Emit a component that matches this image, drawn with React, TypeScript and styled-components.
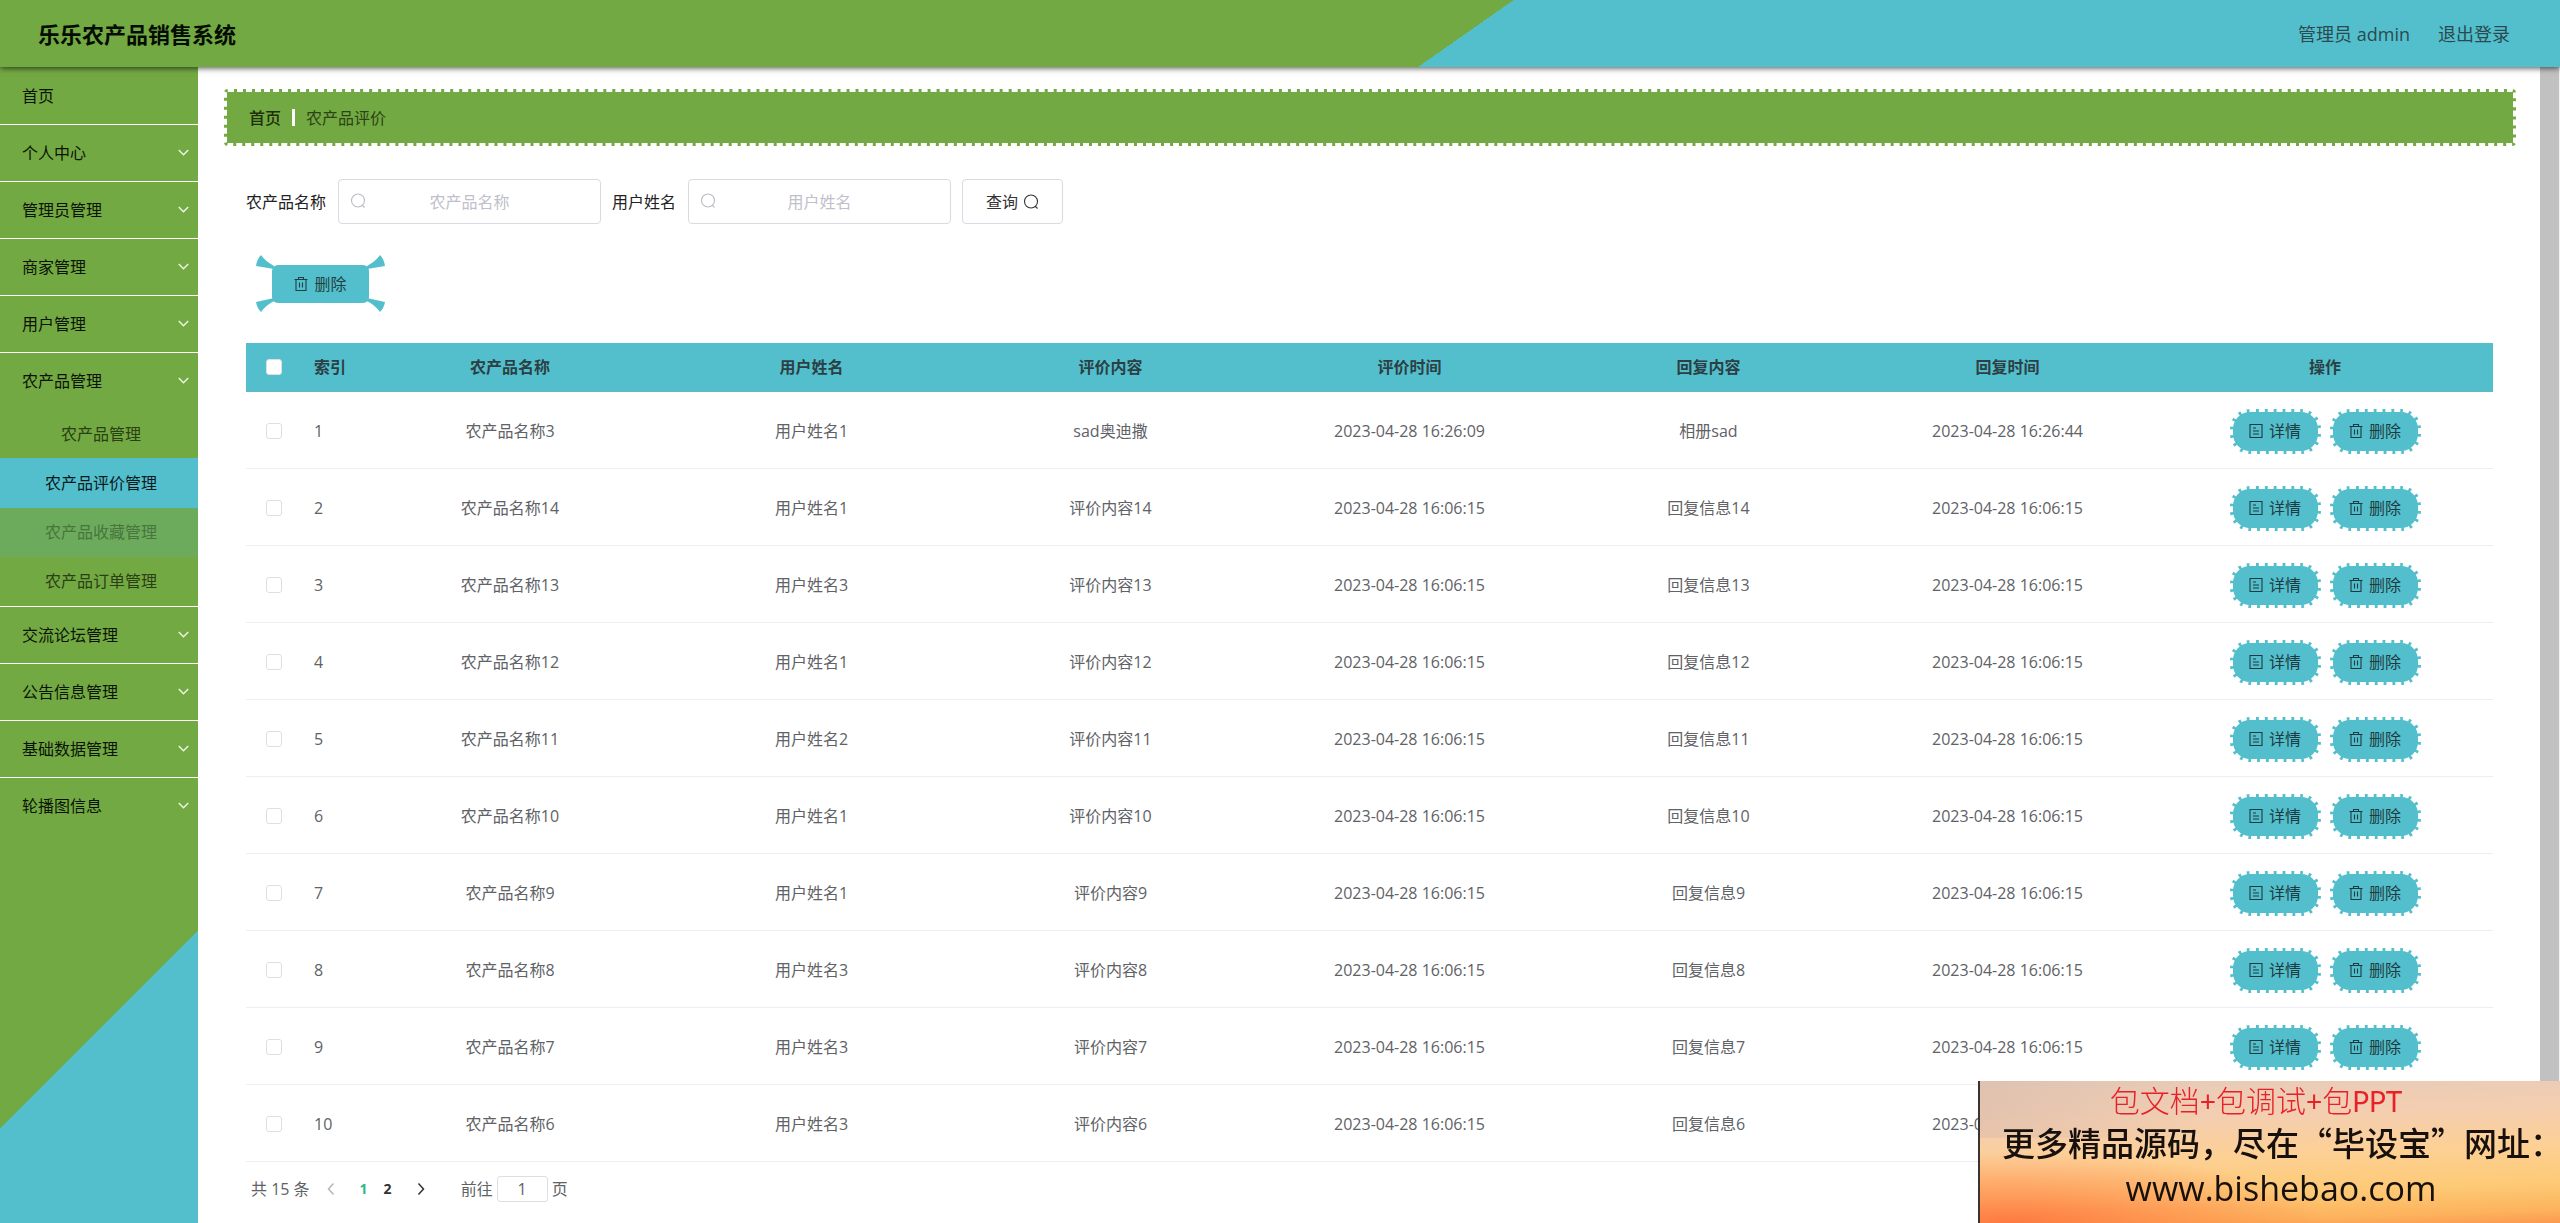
import React from "react";
import styled, { createGlobalStyle, css } from "styled-components";

const green = "#73a943";
const blue = "#54bfcc";

const GlobalStyle = createGlobalStyle`
  *, *::before, *::after { box-sizing: border-box; }
  body {
    margin: 0;
    background: #fff;
    color: #333;
    font: 16px/24px "Open Sans", "Noto Sans CJK SC", sans-serif;
  }
  button, input { font: inherit; color: inherit; }
  ul { list-style: none; margin: 0; padding: 0; }
  a { color: inherit; text-decoration: none; }
`;

const Page = styled.div`
  min-height: 100vh;
  display: flex;
  flex-direction: column;
`;

const Header = styled.header`
  position: relative;
  z-index: 2;
  height: 67px;
  padding: 0 50px 0 38px;
  display: flex;
  align-items: center;
  justify-content: space-between;
  background: linear-gradient(145deg, ${green} 57%, ${blue} 57%);
  box-shadow: 0 1px 6px rgba(0, 0, 0, 0.7);
`;

const Title = styled.h1`
  margin: 0;
  font-size: 22px;
  line-height: 32px;
  font-weight: 700;
  color: #050d02;
`;

const UserNav = styled.nav`
  display: flex;
  gap: 28px;
  font-size: 18px;
  color: #2b4a50;
`;

const Body = styled.div`
  flex: 1;
  display: flex;
`;

const Sidebar = styled.nav`
  flex: 0 0 198px;
  padding-top: 1px;
  background: linear-gradient(-45deg, ${blue} 207px, ${green} 207px);
`;

const MenuItem = styled.li`
  border-bottom: 1px solid #fff;
  &:last-child { border-bottom: 0; }
`;

const MenuLink = styled.a`
  height: 56px;
  padding: 0 8px 0 22px;
  display: flex;
  align-items: center;
  justify-content: space-between;
  color: #0b1404;
`;

const SubMenu = styled.ul`
  height: 197px;
  display: grid;
  grid-template-rows: repeat(4, 1fr);
`;

const SubLink = styled.a<{ $state?: "active" | "hover" }>`
  height: 100%;
  display: flex;
  align-items: center;
  justify-content: center;
  padding-left: 4px;
  color: #2a4012;
  ${({ $state }) => $state === "active" && css`background: ${blue}; color: #0a1a1c;`}
  ${({ $state }) => $state === "hover" && css`background: #6cab5c; color: #48753e;`}
`;

const Main = styled.main`
  flex: 1;
  min-width: 0;
  padding: 22px 24px 20px 26px;
`;

const Breadcrumb = styled.nav`
  height: 57px;
  padding: 0 22px;
  display: flex;
  align-items: center;
  gap: 11px;
  background: ${green};
  border: 3px dashed #fff;
  border-radius: 4px;
  color: #2b4413;
`;

const Crumb = styled.a`
  font-weight: 500;
  color: #1d3009;
`;

const Divider = styled.span`
  width: 3px;
  height: 17px;
  background: #fff;
`;

const Content = styled.div`
  padding: 33px 23px 0 22px;
`;

const SearchForm = styled.form`
  display: flex;
  align-items: center;
  gap: 11px;
`;

const Field = styled.div`
  display: flex;
  align-items: center;
  gap: 12px;
  color: #222;
`;

const InputWrap = styled.div`
  position: relative;
  svg { position: absolute; left: 12px; top: 14px; color: #b9bcc5; }
`;

const TextInput = styled.input`
  display: block;
  width: 263px;
  height: 45px;
  padding: 0 34px;
  border: 1px solid #d9dbe0;
  border-radius: 4px;
  background: #fff;
  text-align: center;
  outline: none;
  &::placeholder { color: #bfc0cb; opacity: 1; }
`;

const SearchButton = styled.button`
  width: 101px;
  height: 45px;
  display: flex;
  align-items: center;
  justify-content: center;
  gap: 5px;
  padding: 0;
  border: 1px solid #d9dbe0;
  border-radius: 4px;
  background: #fff;
`;

const Toolbar = styled.div`
  padding: 41px 26px 40px;
`;

const DeleteButton = styled.button`
  position: relative;
  width: 97px;
  height: 38px;
  display: flex;
  align-items: center;
  justify-content: center;
  gap: 6px;
  padding: 0;
  border: 0;
  border-radius: 6px;
  background: ${blue};
  color: #213f44;
`;

const Ears = styled.svg`
  position: absolute;
  left: -16px;
  top: -10px;
  fill: ${blue};
`;

const Table = styled.table`
  width: 100%;
  table-layout: fixed;
  border-collapse: separate;
  border-spacing: 0;
  color: #606266;
`;

const HeadCell = styled.th<{ $width?: number; $left?: boolean }>`
  width: ${({ $width }) => ($width ? `${$width}px` : "auto")};
  height: 49px;
  padding: 0 12px;
  background: ${blue};
  border-bottom: 1px solid #6ab4bd;
  color: #2b3f45;
  font-weight: 600;
  text-align: ${({ $left }) => ($left ? "left" : "center")};
`;

const Cell = styled.td<{ $left?: boolean }>`
  height: 77px;
  padding: 2px 12px 0;
  border-bottom: 1px solid #ebeef5;
  text-align: ${({ $left }) => ($left ? "left" : "center")};
`;

const Checkbox = styled.input`
  appearance: none;
  display: block;
  width: 16px;
  height: 16px;
  margin: 0 auto;
  border: 1px solid #dcdfe6;
  border-radius: 3px;
  background: #fff;
`;

const Actions = styled.div`
  display: flex;
  justify-content: center;
  gap: 9px;
`;

const PillButton = styled.button`
  width: 91px;
  height: 45px;
  display: flex;
  align-items: center;
  justify-content: center;
  gap: 6px;
  padding: 0;
  background: ${blue};
  border: 3px dashed #fff;
  border-radius: 20px;
  color: #1d3b40;
`;

const Pagination = styled.nav`
  padding: 14px 5px 0;
  display: flex;
  align-items: center;
  color: #606266;
`;

const PageArrow = styled.button<{ $muted?: boolean }>`
  width: 36px;
  height: 24px;
  padding: 0;
  border: 0;
  background: none;
  display: flex;
  align-items: center;
  justify-content: center;
  color: ${({ $muted }) => ($muted ? "#b3b6bd" : "#303133")};
`;

const PageNumber = styled.button<{ $current?: boolean }>`
  width: 24px;
  height: 24px;
  padding: 0;
  border: 0;
  background: none;
  font-size: 14px;
  font-weight: 700;
  color: ${({ $current }) => ($current ? "#2cb988" : "#303133")};
`;

const PageList = styled.div`
  display: flex;
  margin: 0 3px;
`;

const Total = styled.span`
  margin-right: 3px;
`;

const Jump = styled.label`
  display: flex;
  align-items: center;
  gap: 4px;
  margin-left: 22px;
`;

const JumpInput = styled.input`
  width: 51px;
  height: 26px;
  padding: 0;
  border: 1px solid #dcdfe6;
  border-radius: 3px;
  background: #fff;
  text-align: center;
`;

const ScrollTrack = styled.div`
  flex: 0 0 20px;
  background: #c1c1c1;
  border-right: 1px solid #f1f1f1;
`;

const Banner = styled.aside`
  position: fixed;
  z-index: 3;
  right: 0;
  bottom: 0;
  width: 582px;
  height: 142px;
  border-left: 2px solid #3b3330;
  text-align: center;
  color: #17100c;
  background:
    radial-gradient(ellipse 55% 50% at 5% 100%, rgba(255, 95, 50, 0.7), rgba(255, 130, 60, 0)),
    linear-gradient(to right, rgba(215, 185, 170, 0.5), rgba(240, 200, 170, 0) 40%) top / 100% 40% no-repeat,
    linear-gradient(178deg, #e6cbb8 0%, #f4ceb0 28%, #fdd094 52%, #fdca76 75%, #fdb25c 92%, #fb9a50 100%);
`;

const BannerRed = styled.p`
  margin: 0;
  padding-right: 28px;
  font-family: Lato, "Noto Sans CJK SC", sans-serif;
  font-size: 30px;
  line-height: 38px;
  font-weight: 300;
  color: #e8202a;
`;

const Latin = styled.span`
  font-size: 28px;
  font-weight: 400;
`;

const BannerText = styled.p`
  margin: 0;
  font-family: "Noto Sans CJK SC", sans-serif;
  font-size: 33px;
  line-height: 44px;
  font-weight: 500;
  white-space: nowrap;
  padding-left: 22px;
  text-align: left;
`;

const BannerUrl = styled.p`
  margin: 0;
  padding-left: 22px;
  font-family: "Open Sans", sans-serif;
  font-size: 34px;
  line-height: 48px;
  font-weight: 500;
`;

const Chevron = () => (
  <svg width="13" height="12" viewBox="0 0 14 14" fill="none" stroke="#eef6e6" strokeWidth="1.6">
    <path d="M1.500 3.500 7 9l5.500-5.500" />
  </svg>
);

const Search = () => (
  <svg width="16" height="16" viewBox="0 0 16 16" fill="none" stroke="currentColor" strokeWidth="1.1">
    <circle cx="8" cy="7.500" r="6.500" />
    <path d="m12 12 2.500 2.500" />
  </svg>
);

const Trash = () => (
  <svg width="14" height="16" viewBox="0 0 14 16" fill="none" stroke="currentColor" strokeWidth="1.1">
    <path d="M.5 3.500h13M4.500 3.500v-2h5v2M2 3.500v11h10v-11M5.500 6.500v5M8.500 6.500v5" />
  </svg>
);

const Doc = () => (
  <svg width="14" height="16" viewBox="0 0 14 16" fill="none" stroke="currentColor" strokeWidth="1.1">
    <path d="M1 1.500h12v13H1zM4 5h3M4 8h6M4 11h6" />
  </svg>
);

const Arrow = ({ back }: { back?: boolean }) => (
  <svg width="12" height="14" viewBox="0 0 12 14" fill="none" stroke="currentColor" strokeWidth="1.5">
    <path d={back ? "M8.500 1.500 3.500 7l5 5.500" : "M3.500 1.500 8.500 7l-5 5.500"} />
  </svg>
);

const menu: { label: string; children?: { label: string; state?: "active" | "hover" }[] }[] = [
  { label: "首页" },
  { label: "个人中心" },
  { label: "管理员管理" },
  { label: "商家管理" },
  { label: "用户管理" },
  {
    label: "农产品管理",
    children: [
      { label: "农产品管理" },
      { label: "农产品评价管理", state: "active" },
      { label: "农产品收藏管理", state: "hover" },
      { label: "农产品订单管理" },
    ],
  },
  { label: "交流论坛管理" },
  { label: "公告信息管理" },
  { label: "基础数据管理" },
  { label: "轮播图信息" },
];

const late = "2023-04-28 16:06:15";
const rows = [
  ["农产品名称3", "用户姓名1", "sad奥迪撒", "2023-04-28 16:26:09", "相册sad", "2023-04-28 16:26:44"],
  ["农产品名称14", "用户姓名1", "评价内容14", late, "回复信息14", late],
  ["农产品名称13", "用户姓名3", "评价内容13", late, "回复信息13", late],
  ["农产品名称12", "用户姓名1", "评价内容12", late, "回复信息12", late],
  ["农产品名称11", "用户姓名2", "评价内容11", late, "回复信息11", late],
  ["农产品名称10", "用户姓名1", "评价内容10", late, "回复信息10", late],
  ["农产品名称9", "用户姓名1", "评价内容9", late, "回复信息9", late],
  ["农产品名称8", "用户姓名3", "评价内容8", late, "回复信息8", late],
  ["农产品名称7", "用户姓名3", "评价内容7", late, "回复信息7", late],
  ["农产品名称6", "用户姓名3", "评价内容6", late, "回复信息6", late],
];

const SearchField = ({ id, label }: { id: string; label: string }) => (
  <Field>
    <label htmlFor={id}>{label}</label>
    <InputWrap>
      <Search />
      <TextInput id={id} type="text" placeholder={label} />
    </InputWrap>
  </Field>
);

export default function App() {
  return (
    <Page lang="zh-CN">
      <GlobalStyle />
      <Header>
        <Title>乐乐农产品销售系统</Title>
        <UserNav>
          <span>管理员 admin</span>
          <a href="#logout">退出登录</a>
        </UserNav>
      </Header>
      <Body>
        <Sidebar>
          <ul>
            {menu.map((item, i) => (
              <MenuItem key={item.label}>
                <MenuLink href="#menu">
                  {item.label}
                  {i > 0 && <Chevron />}
                </MenuLink>
                {item.children && (
                  <SubMenu>
                    {item.children.map((child) => (
                      <li key={child.label}>
                        <SubLink href="#sub" $state={child.state}>{child.label}</SubLink>
                      </li>
                    ))}
                  </SubMenu>
                )}
              </MenuItem>
            ))}
          </ul>
        </Sidebar>
        <Main>
          <Breadcrumb>
            <Crumb href="#home">首页</Crumb>
            <Divider />
            <span>农产品评价</span>
          </Breadcrumb>
          <Content>
            <SearchForm onSubmit={(e) => e.preventDefault()}>
              <SearchField id="product" label="农产品名称" />
              <SearchField id="user" label="用户姓名" />
              <SearchButton type="submit">
                查询 <Search />
              </SearchButton>
            </SearchForm>
            <Toolbar>
              <DeleteButton type="button">
                <Ears width="129" height="58" viewBox="0 0 129 58">
                  <path d="M0 11Q1 4 5 0Q9 6 18 11V14ZM129 11Q128 4 124 0Q120 6 111 11V14ZM0 47Q1 53 5 57Q9 51 18 46V43ZM129 47Q128 53 124 57Q120 51 111 46V43Z" />
                </Ears>
                <Trash />
                删除
              </DeleteButton>
            </Toolbar>
            <Table>
              <thead>
                <tr>
                  <HeadCell $width={56}><Checkbox type="checkbox" aria-label="全选" /></HeadCell>
                  <HeadCell $width={56} $left>索引</HeadCell>
                  <HeadCell $width={304}>农产品名称</HeadCell>
                  <HeadCell>用户姓名</HeadCell>
                  <HeadCell>评价内容</HeadCell>
                  <HeadCell>评价时间</HeadCell>
                  <HeadCell>回复内容</HeadCell>
                  <HeadCell>回复时间</HeadCell>
                  <HeadCell $width={336}>操作</HeadCell>
                </tr>
              </thead>
              <tbody>
                {rows.map((row, i) => (
                  <tr key={i}>
                    <Cell><Checkbox type="checkbox" aria-label={row[0]} /></Cell>
                    <Cell $left>{i + 1}</Cell>
                    {row.map((text, j) => (
                      <Cell key={j}>{text}</Cell>
                    ))}
                    <Cell>
                      <Actions>
                        <PillButton type="button"><Doc />详情</PillButton>
                        <PillButton type="button"><Trash />删除</PillButton>
                      </Actions>
                    </Cell>
                  </tr>
                ))}
              </tbody>
            </Table>
            <Pagination>
              <Total>共 15 条</Total>
              <PageArrow type="button" aria-label="上一页" $muted><Arrow back /></PageArrow>
              <PageList>
                <PageNumber type="button" $current>1</PageNumber>
                <PageNumber type="button">2</PageNumber>
              </PageList>
              <PageArrow type="button" aria-label="下一页"><Arrow /></PageArrow>
              <Jump>
                前往
                <JumpInput type="text" defaultValue="1" />
                页
              </Jump>
            </Pagination>
          </Content>
        </Main>
        <ScrollTrack />
      </Body>
      <Banner>
        <BannerRed>
          包文档<Latin>+</Latin>包调试<Latin>+</Latin>包<Latin>PPT</Latin>
        </BannerRed>
        <BannerText>更多精品源码，尽在“毕设宝”网址：</BannerText>
        <BannerUrl>www.bishebao.com</BannerUrl>
      </Banner>
    </Page>
  );
}
